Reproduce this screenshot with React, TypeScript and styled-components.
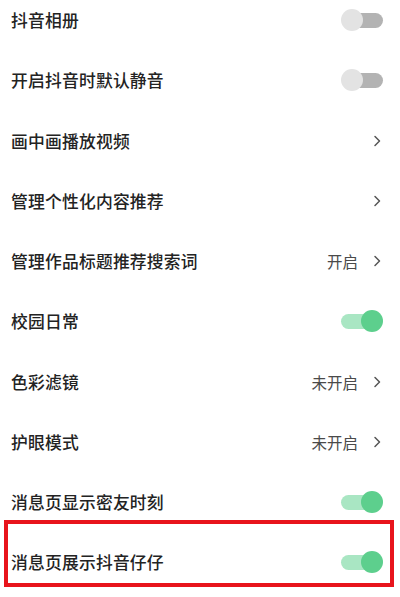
import React from "react";
import styled, { createGlobalStyle } from "styled-components";

const Global = createGlobalStyle`
  html, body { margin: 0; padding: 0; background: #ffffff; }
  body { font-family: "Noto Sans CJK SC", "Noto Sans", sans-serif; overflow: hidden; }
`;

const Page = styled.div`
  width: 400px;
  height: 597px;
  background: #fff;
  overflow: hidden;
`;

const List = styled.div`
  display: flex;
  flex-direction: column;
  margin-top: -10px;
`;

const Row = styled.div`
  height: 60.25px;
  box-sizing: border-box;
  display: flex;
  align-items: center;
  justify-content: space-between;
  padding: 0 17px 0 11px;
  position: relative;
`;

const Highlight = styled.div`
  position: absolute;
  left: 4px;
  right: 6px;
  top: -12px;
  bottom: 6px;
  border: 4px solid #e8141c;
  pointer-events: none;
`;

const Label = styled.span`
  font-size: 16.8px;
  color: #232323;
  letter-spacing: 0.2px;
  font-weight: 500;
`;

const Right = styled.div`
  display: flex;
  align-items: center;
  gap: 15px;
  margin-right: 2px;
`;

const Value = styled.span`
  font-size: 15.5px;
  color: #4a4a4a;
`;

const Track = styled.div<{ $on: boolean }>`
  width: 42px;
  height: 23px;
  position: relative;
  &::before {
    content: "";
    position: absolute;
    top: 4px;
    height: 15px;
    left: ${(p) => (p.$on ? "0" : "4px")};
    right: ${(p) => (p.$on ? "4px" : "0")};
    border-radius: 8px;
    background: ${(p) => (p.$on ? "#a9e6c3" : "#b3b3b3")};
  }
  &::after {
    content: "";
    position: absolute;
    top: 0;
    width: 22px;
    height: 22px;
    border-radius: 50%;
    left: ${(p) => (p.$on ? "20px" : "0")};
    background: ${(p) => (p.$on ? "#5dcf8d" : "#e3e3e3")};
  }
`;

const Chevron = () => (
  <svg width="8" height="12" viewBox="0 0 8 12" style={{ display: "block" }}>
    <path d="M2 1.5 L6.5 6 L2 10.5" fill="none" stroke="#555" strokeWidth="1.5" strokeLinecap="round" strokeLinejoin="round" />
  </svg>
);

type Item =
  | { label: string; kind: "toggle"; on: boolean; highlight?: boolean }
  | { label: string; kind: "link"; value?: string };

const items: Item[] = [
  { label: "抖音相册", kind: "toggle", on: false },
  { label: "开启抖音时默认静音", kind: "toggle", on: false },
  { label: "画中画播放视频", kind: "link" },
  { label: "管理个性化内容推荐", kind: "link" },
  { label: "管理作品标题推荐搜索词", kind: "link", value: "开启" },
  { label: "校园日常", kind: "toggle", on: true },
  { label: "色彩滤镜", kind: "link", value: "未开启" },
  { label: "护眼模式", kind: "link", value: "未开启" },
  { label: "消息页显示密友时刻", kind: "toggle", on: true },
  { label: "消息页展示抖音仔仔", kind: "toggle", on: true, highlight: true },
];

export default function App() {
  return (
    <Page>
      <Global />
      <List>
        {items.map((it) => (
          <Row key={it.label}>
            <Label>{it.label}</Label>
            {it.kind === "toggle" ? (
              <Track $on={it.on} />
            ) : (
              <Right>
                {it.value && <Value>{it.value}</Value>}
                <Chevron />
              </Right>
            )}
            {it.kind === "toggle" && it.highlight && <Highlight />}
          </Row>
        ))}
      </List>
    </Page>
  );
}
